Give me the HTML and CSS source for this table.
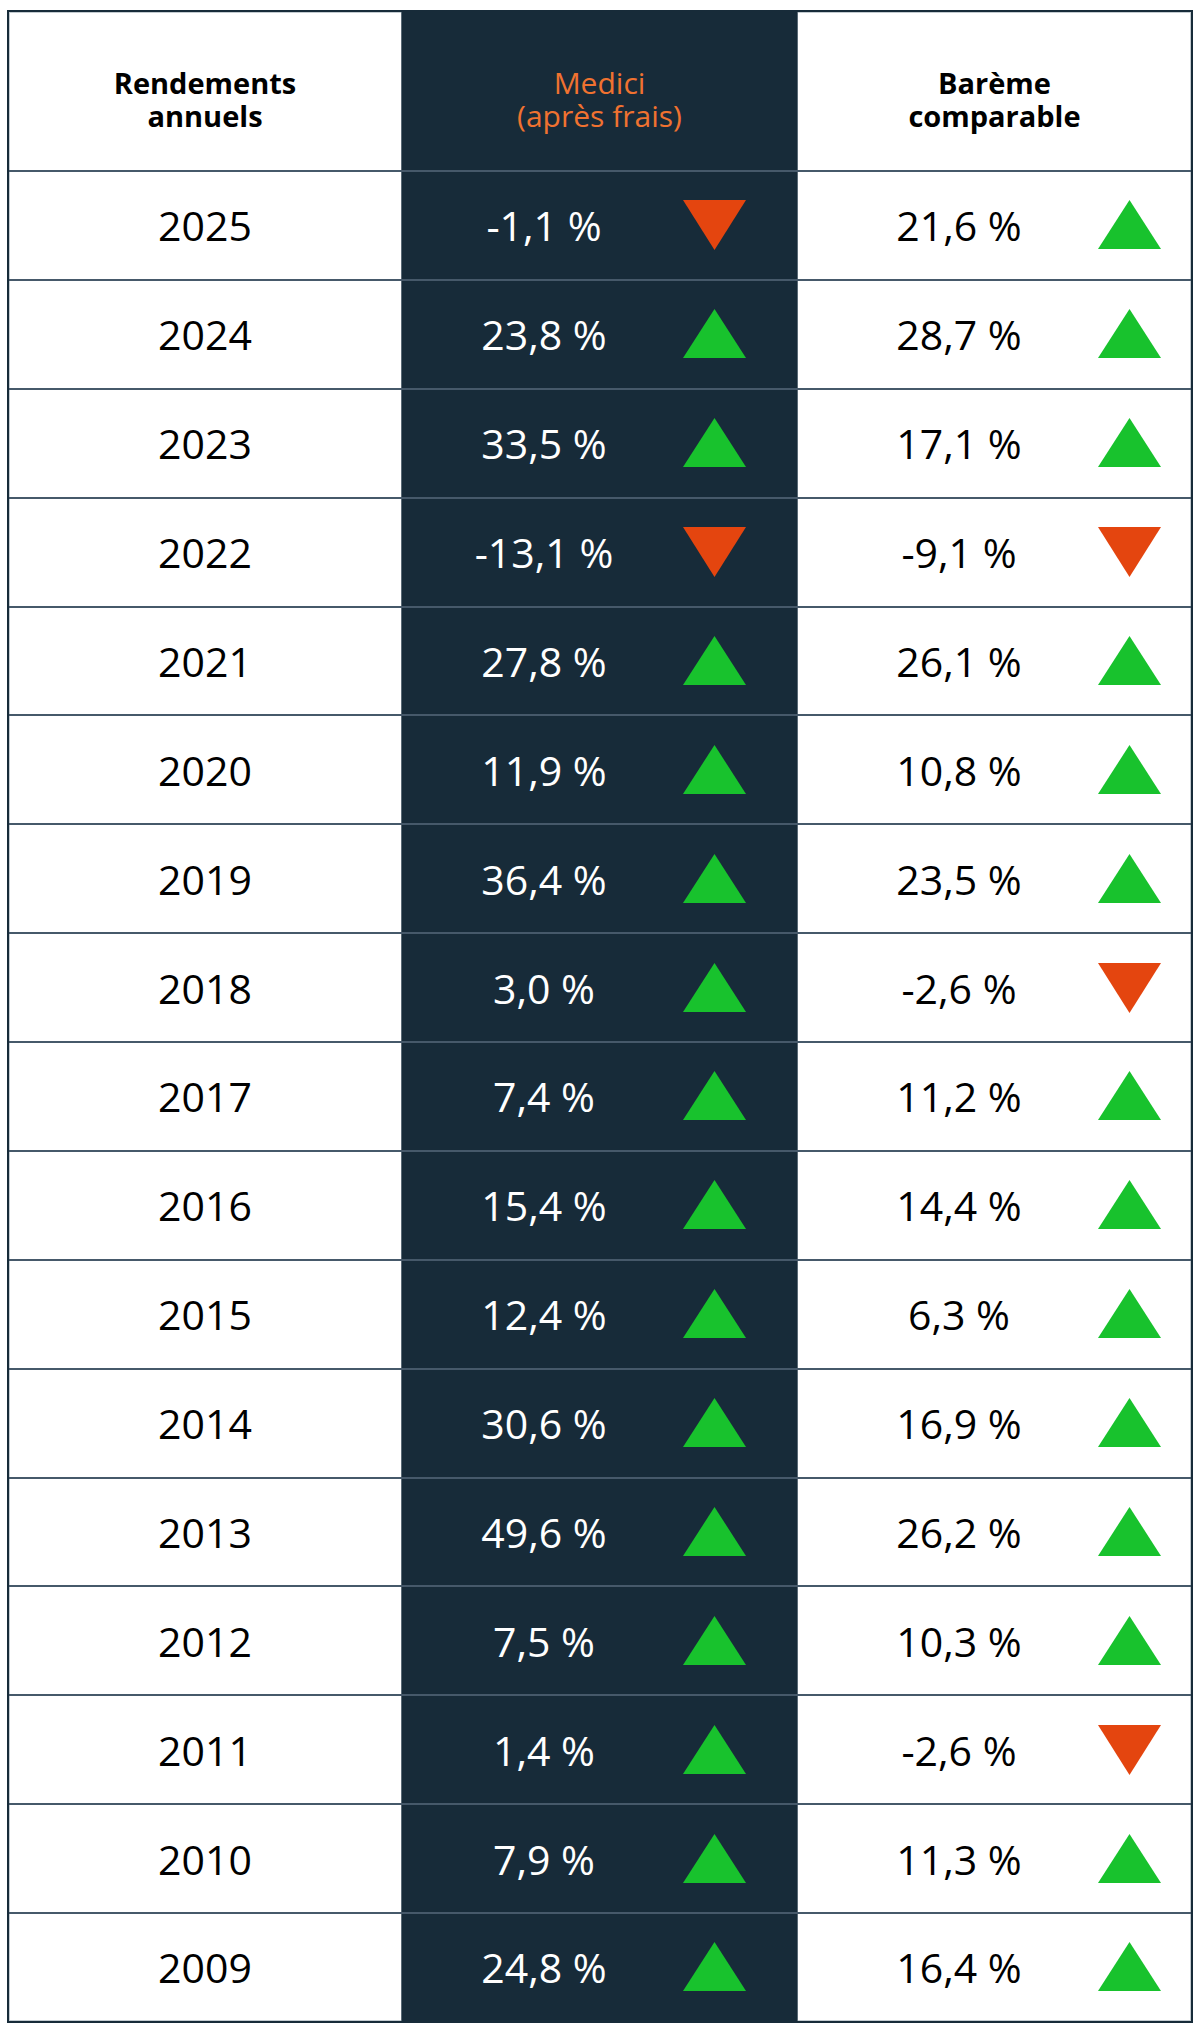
FILE: index.html
```html
<!DOCTYPE html>
<html lang="fr">
<head>
<meta charset="utf-8">
<title>Rendements annuels</title>
<link rel="stylesheet" href="styles.css">
</head>
<body>
<svg width="0" height="0" class="defs">
  <defs>
    <polygon id="up" points="31.5,0 63,49 0,49"/>
    <polygon id="down" points="0,0 63,0 31.5,50"/>
  </defs>
</svg>
<div class="table">
  <div class="row head">
    <div class="cell c1"><div class="h"><span class="ln">Rendements</span><span class="ln">annuels</span></div></div>
    <div class="cell c2"><div class="h orange"><span class="ln">Medici</span><span class="ln">(après frais)</span></div></div>
    <div class="cell c3"><div class="h"><span class="ln">Barème</span><span class="ln">comparable</span></div></div>
  </div>
  <div class="row"><div class="cell c1">2025</div><div class="cell c2"><span class="v">-1,1 %</span><svg class="tri down" viewBox="0 0 63 50"><use href="#down"/></svg></div><div class="cell c3"><span class="v">21,6 %</span><svg class="tri up" viewBox="0 0 63 50"><use href="#up"/></svg></div></div>
  <div class="row"><div class="cell c1">2024</div><div class="cell c2"><span class="v">23,8 %</span><svg class="tri up" viewBox="0 0 63 50"><use href="#up"/></svg></div><div class="cell c3"><span class="v">28,7 %</span><svg class="tri up" viewBox="0 0 63 50"><use href="#up"/></svg></div></div>
  <div class="row"><div class="cell c1">2023</div><div class="cell c2"><span class="v">33,5 %</span><svg class="tri up" viewBox="0 0 63 50"><use href="#up"/></svg></div><div class="cell c3"><span class="v">17,1 %</span><svg class="tri up" viewBox="0 0 63 50"><use href="#up"/></svg></div></div>
  <div class="row"><div class="cell c1">2022</div><div class="cell c2"><span class="v">-13,1 %</span><svg class="tri down" viewBox="0 0 63 50"><use href="#down"/></svg></div><div class="cell c3"><span class="v">-9,1 %</span><svg class="tri down" viewBox="0 0 63 50"><use href="#down"/></svg></div></div>
  <div class="row"><div class="cell c1">2021</div><div class="cell c2"><span class="v">27,8 %</span><svg class="tri up" viewBox="0 0 63 50"><use href="#up"/></svg></div><div class="cell c3"><span class="v">26,1 %</span><svg class="tri up" viewBox="0 0 63 50"><use href="#up"/></svg></div></div>
  <div class="row"><div class="cell c1">2020</div><div class="cell c2"><span class="v">11,9 %</span><svg class="tri up" viewBox="0 0 63 50"><use href="#up"/></svg></div><div class="cell c3"><span class="v">10,8 %</span><svg class="tri up" viewBox="0 0 63 50"><use href="#up"/></svg></div></div>
  <div class="row"><div class="cell c1">2019</div><div class="cell c2"><span class="v">36,4 %</span><svg class="tri up" viewBox="0 0 63 50"><use href="#up"/></svg></div><div class="cell c3"><span class="v">23,5 %</span><svg class="tri up" viewBox="0 0 63 50"><use href="#up"/></svg></div></div>
  <div class="row"><div class="cell c1">2018</div><div class="cell c2"><span class="v">3,0 %</span><svg class="tri up" viewBox="0 0 63 50"><use href="#up"/></svg></div><div class="cell c3"><span class="v">-2,6 %</span><svg class="tri down" viewBox="0 0 63 50"><use href="#down"/></svg></div></div>
  <div class="row"><div class="cell c1">2017</div><div class="cell c2"><span class="v">7,4 %</span><svg class="tri up" viewBox="0 0 63 50"><use href="#up"/></svg></div><div class="cell c3"><span class="v">11,2 %</span><svg class="tri up" viewBox="0 0 63 50"><use href="#up"/></svg></div></div>
  <div class="row"><div class="cell c1">2016</div><div class="cell c2"><span class="v">15,4 %</span><svg class="tri up" viewBox="0 0 63 50"><use href="#up"/></svg></div><div class="cell c3"><span class="v">14,4 %</span><svg class="tri up" viewBox="0 0 63 50"><use href="#up"/></svg></div></div>
  <div class="row"><div class="cell c1">2015</div><div class="cell c2"><span class="v">12,4 %</span><svg class="tri up" viewBox="0 0 63 50"><use href="#up"/></svg></div><div class="cell c3"><span class="v">6,3 %</span><svg class="tri up" viewBox="0 0 63 50"><use href="#up"/></svg></div></div>
  <div class="row"><div class="cell c1">2014</div><div class="cell c2"><span class="v">30,6 %</span><svg class="tri up" viewBox="0 0 63 50"><use href="#up"/></svg></div><div class="cell c3"><span class="v">16,9 %</span><svg class="tri up" viewBox="0 0 63 50"><use href="#up"/></svg></div></div>
  <div class="row"><div class="cell c1">2013</div><div class="cell c2"><span class="v">49,6 %</span><svg class="tri up" viewBox="0 0 63 50"><use href="#up"/></svg></div><div class="cell c3"><span class="v">26,2 %</span><svg class="tri up" viewBox="0 0 63 50"><use href="#up"/></svg></div></div>
  <div class="row"><div class="cell c1">2012</div><div class="cell c2"><span class="v">7,5 %</span><svg class="tri up" viewBox="0 0 63 50"><use href="#up"/></svg></div><div class="cell c3"><span class="v">10,3 %</span><svg class="tri up" viewBox="0 0 63 50"><use href="#up"/></svg></div></div>
  <div class="row"><div class="cell c1">2011</div><div class="cell c2"><span class="v">1,4 %</span><svg class="tri up" viewBox="0 0 63 50"><use href="#up"/></svg></div><div class="cell c3"><span class="v">-2,6 %</span><svg class="tri down" viewBox="0 0 63 50"><use href="#down"/></svg></div></div>
  <div class="row"><div class="cell c1">2010</div><div class="cell c2"><span class="v">7,9 %</span><svg class="tri up" viewBox="0 0 63 50"><use href="#up"/></svg></div><div class="cell c3"><span class="v">11,3 %</span><svg class="tri up" viewBox="0 0 63 50"><use href="#up"/></svg></div></div>
  <div class="row"><div class="cell c1">2009</div><div class="cell c2"><span class="v">24,8 %</span><svg class="tri up" viewBox="0 0 63 50"><use href="#up"/></svg></div><div class="cell c3"><span class="v">16,4 %</span><svg class="tri up" viewBox="0 0 63 50"><use href="#up"/></svg></div></div>
</div>
</body>
</html>
```
FILE: styles.css
```css
* { box-sizing: border-box; }
html, body { margin: 0; padding: 0; background: #fff; }
body { font-family: "Open Sans", "Noto Sans", sans-serif; }
.defs { position: absolute; width: 0; height: 0; }

.table {
  margin: 10px 0 0 7px;
  width: 1186px;
  height: 2013px;
  border: 2px solid #172b39;
  background: #fff;
  box-shadow: inset 0 0 0 1px #c3cbd0;
  display: flex;
  flex-direction: column;
}

.row {
  flex: 1 1 0;
  display: grid;
  grid-template-columns: 392px 397px 1fr;
  border-top: 2px solid #46596a;
  min-height: 0;
}
.row.head {
  flex: 0 0 158px;
  border-top: none;
}

.cell {
  display: flex;
  align-items: center;
  font-size: 41px;
  color: #000;
}
.c1 { justify-content: center; }
.c2 {
  background: #172b39;
  color: #fff;
  padding-left: 30px;
  border-left: 1px solid #5a6a76;
  border-right: 1px solid #5a6a76;
}
.c3 { padding-left: 49px; }

.head .cell { justify-content: center; padding: 16px 0 0 0; }

.h {
  display: flex;
  flex-direction: column;
  align-items: center;
  gap: 1px;
  font-size: 29px;
  font-weight: 700;
  color: #000;
}
.ln {
  display: block;
  height: 32px;
  line-height: 32px;
  white-space: nowrap;
}
.h.orange { color: #f07230; font-weight: 400; font-size: 30px; }

.v {
  width: 224px;
  text-align: center;
}
.tri {
  width: 63px;
  height: 50px;
  margin-left: 27px;
  flex: none;
}
.tri.up { fill: #18c22d; }
.tri.down { fill: #e4450f; }
```
